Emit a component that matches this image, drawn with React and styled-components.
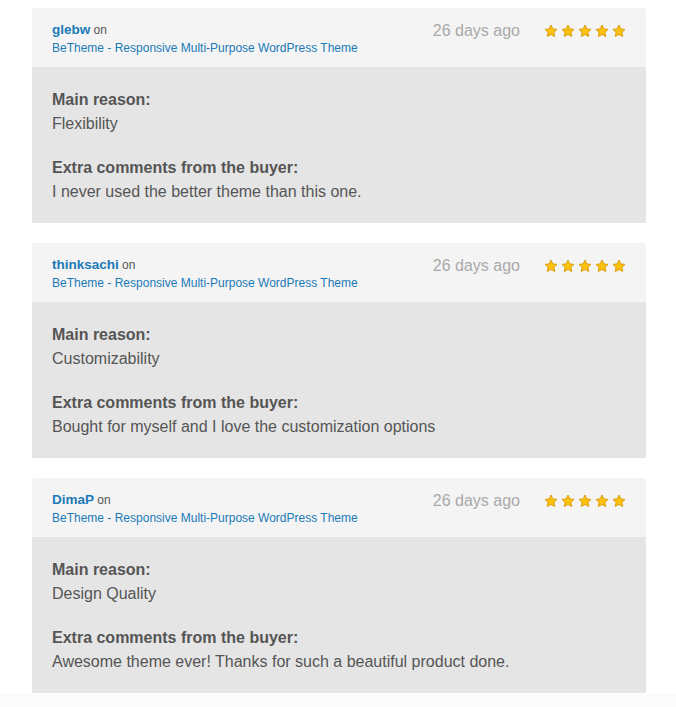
import styled, { createGlobalStyle } from 'styled-components';

const GlobalStyle = createGlobalStyle`
    html, body {
        margin: 0;
        padding: 0;
        background-color: #ffffff;
        font-family: "Liberation Sans", Arial, Helvetica, sans-serif;
    }
`;

const Page = styled.div`
    display: flex;
    flex-direction: column;
    min-height: 707px;
`;

const List = styled.div`
    display: flex;
    flex-direction: column;
    gap: 20px;
    padding: 8px 30px 0 32px;
`;

const Card = styled.div`
    display: flex;
    flex-direction: column;
`;

const Header = styled.div`
    display: flex;
    justify-content: space-between;
    align-items: flex-start;
    background-color: #f4f4f4;
    border-radius: 3px 3px 0 0;
    padding: 13px 19px 10px 20px;
    height: 36px;
`;

const Who = styled.div`
    display: flex;
    flex-direction: column;
`;

const UserLine = styled.div`
    line-height: 18px;
    font-size: 12px;
    color: #555;
    a {
        color: #1b7ab8;
        font-weight: bold;
        font-size: 13.5px;
        text-decoration: none;
    }
`;

const Product = styled.a`
    line-height: 18px;
    font-size: 12px;
    color: #1b7ab8;
    text-decoration: none;
`;

const Meta = styled.div`
    display: flex;
    align-items: center;
    gap: 23px;
    height: 20px;
`;

const When = styled.span`
    font-size: 16px;
    color: #a9a9a9;
    margin-right: 1px;
`;

const Stars = styled.div`
    display: flex;
    gap: 3px;
    margin-right: 1px;
`;

const Body = styled.div`
    background-color: #e5e5e5;
    padding: 21px 20px 19px 20px;
    color: #555;
    font-size: 16px;
    line-height: 24px;
`;

const Section = styled.div`
    & + & {
        margin-top: 20px;
    }
`;

const Label = styled.div`
    font-weight: bold;
`;

const Footer = styled.div`
    flex: 1;
    margin-top: 1px;
    background-color: #fbfbfb;
`;

function Star() {
    return (
        <svg width="14" height="14" viewBox="0 0 24 24">
            <path
                d="M12 1.8l3.1 6.6 7.2.9-5.3 5 1.4 7.1L12 17.9l-6.4 3.5 1.4-7.1-5.3-5 7.2-.9z"
                fill="#fcc10f"
                stroke="#d99a00"
                strokeWidth="1.6"
                strokeLinejoin="round"
            />
        </svg>
    );
}

const reviews = [
    { user: 'glebw', reason: 'Flexibility', comment: 'I never used the better theme than this one.' },
    { user: 'thinksachi', reason: 'Customizability', comment: 'Bought for myself and I love the customization options' },
    { user: 'DimaP', reason: 'Design Quality', comment: 'Awesome theme ever! Thanks for such a beautiful product done.' },
];

export default function App() {
    return (
        <>
            <GlobalStyle />
            <Page>
                <List>
                    {reviews.map((r) => (
                        <Card key={r.user}>
                            <Header>
                                <Who>
                                    <UserLine><a href="#">{r.user}</a> on</UserLine>
                                    <Product href="#">BeTheme - Responsive Multi-Purpose WordPress Theme</Product>
                                </Who>
                                <Meta>
                                    <When>26 days ago</When>
                                    <Stars>
                                        {[0, 1, 2, 3, 4].map((i) => <Star key={i} />)}
                                    </Stars>
                                </Meta>
                            </Header>
                            <Body>
                                <Section>
                                    <Label>Main reason:</Label>
                                    <div>{r.reason}</div>
                                </Section>
                                <Section>
                                    <Label>Extra comments from the buyer:</Label>
                                    <div>{r.comment}</div>
                                </Section>
                            </Body>
                        </Card>
                    ))}
                </List>
                <Footer />
            </Page>
        </>
    );
}
